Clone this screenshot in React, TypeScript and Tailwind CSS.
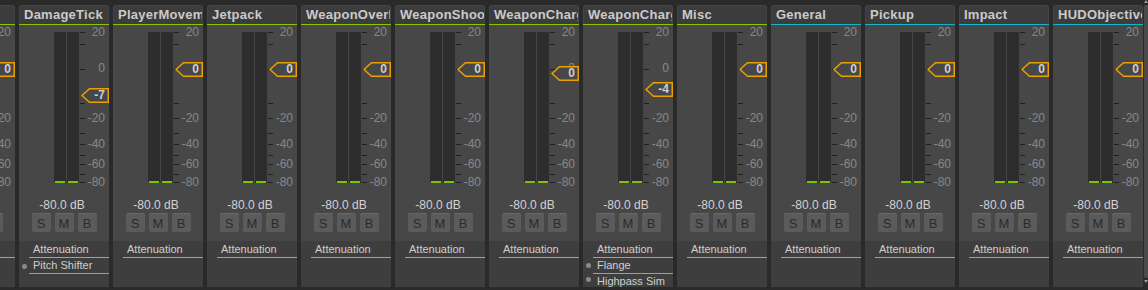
import React from "react";

type Strip = {
  name: string;
  line: "green" | "cyan";
  val: string;
  top: number;
  fx: string[];
};

const strips: Strip[] = [
  { name: "SFX", line: "green", val: "0", top: 30, fx: [] },
  { name: "DamageTick", line: "green", val: "-7", top: 56, fx: ["Pitch Shifter"] },
  { name: "PlayerMovement", line: "green", val: "0", top: 30, fx: [] },
  { name: "Jetpack", line: "green", val: "0", top: 30, fx: [] },
  { name: "WeaponOverheat", line: "green", val: "0", top: 30, fx: [] },
  { name: "WeaponShoot", line: "green", val: "0", top: 30, fx: [] },
  { name: "WeaponCharge", line: "green", val: "0", top: 34, fx: [] },
  { name: "WeaponCharged", line: "green", val: "-4", top: 50, fx: ["Flange", "Highpass Sim"] },
  { name: "Misc", line: "green", val: "0", top: 30, fx: [] },
  { name: "General", line: "cyan", val: "0", top: 30, fx: [] },
  { name: "Pickup", line: "cyan", val: "0", top: 30, fx: [] },
  { name: "Impact", line: "cyan", val: "0", top: 30, fx: [] },
  { name: "HUDObjective", line: "cyan", val: "0", top: 30, fx: [] },
];

const ticks = [0, 12, 37, 71, 86, 101, 112, 123, 132, 142, 150];
const labels: [string, number][] = [
  ["20", 0],
  ["0", 36],
  ["-20", 86],
  ["-40", 112],
  ["-60", 132],
  ["-80", 150],
];

function Handle({ val, top }: { val: string; top: number }) {
  return (
    <div className="absolute left-[62px] w-[28px] h-[15px]" style={{ top }}>
      <svg width="28" height="15" className="absolute inset-0">
        <path d="M1 7.5 L8.5 0.75 H27.25 V14.25 H8.5 Z" fill="#474747" stroke="#eaa100" strokeWidth="1.5" strokeLinejoin="miter" />
      </svg>
      <div className="absolute right-[4px] top-0 h-[15px] leading-[15px] text-[12px] font-bold text-[#cfcfcf]">{val}</div>
    </div>
  );
}

function Meter({ s }: { s: Strip }) {
  return (
    <div className="relative mt-[7px] h-[151px]">
      <div className="absolute left-[35px] top-0 w-[12px] h-[151px] bg-[#2d2d2d] flex flex-col justify-end px-[1px]">
        <div className="h-[2px] bg-[#7cc400]" />
      </div>
      <div className="absolute left-[48px] top-0 w-[12px] h-[151px] bg-[#2d2d2d] flex flex-col justify-end px-[1px]">
        <div className="h-[2px] bg-[#7cc400]" />
      </div>
      {ticks.map((t) => (
        <div key={t} className="absolute left-[61px] w-[5px] h-[1px] bg-[#1f1f1f]" style={{ top: t }} />
      ))}
      {labels.map(([l, y]) => (
        <div key={l} className="absolute right-[4px] h-[12px] leading-[12px] text-[12px] text-[#878787]" style={{ top: y - 6 }}>
          {l}
        </div>
      ))}
      <Handle val={s.val} top={s.top} />
    </div>
  );
}

function Btn({ c }: { c: string }) {
  return (
    <div className="w-[19px] h-[19px] rounded-[2px] bg-[#5b5b5b] border-t border-[#686868] flex items-center justify-center text-[13px] leading-[13px] text-[#2c2c2c]">
      {c}
    </div>
  );
}

function StripView({ s }: { s: Strip }) {
  return (
    <div className="w-[90px] shrink-0 flex flex-col">
      <div className="mt-[5px] h-[19px] rounded-t-[3px] bg-[#3c3c3c] border-t border-x border-[#444] overflow-hidden whitespace-nowrap pl-[4px] text-[13px] font-bold tracking-[0.25px] leading-[18px] text-[#cacaca]">
        {s.name}
      </div>
      <div className={`h-[1px] ${s.line === "green" ? "bg-[#8cc400]" : "bg-[#13b5c8]"}`} />
      <div className="flex-1 bg-[#474747] flex flex-col">
        <Meter s={s} />
        <div className="mt-[15px] h-[14px] leading-[14px] text-center text-[12px] text-[#d2d2d2] pr-[4px]">-80.0 dB</div>
        <div className="mt-[1px] flex justify-center gap-[4px]">
          <Btn c="S" />
          <Btn c="M" />
          <Btn c="B" />
        </div>
        <div className="mt-[9px] h-[46px] bg-[#3e3e3e] flex">
          <div className="w-[10px] flex flex-col pt-[17px]">
            {s.fx.map((f) => (
              <div key={f} className="h-[16px] flex items-center justify-center">
                <div className="w-[5px] h-[5px] rounded-full bg-[#8a8a8a]" />
              </div>
            ))}
          </div>
          <div className="flex-1 flex flex-col">
            <div className="h-[17px] border-b border-[#e0a000] pl-[4px] leading-[16px] text-[11px] text-[#cfcfcf]">Attenuation</div>
            {s.fx.map((f, i) => (
              <div
                key={f}
                className={`h-[16px] pl-[4px] leading-[15px] text-[11px] text-[#cfcfcf] ${i === 0 ? "border-b border-[#8cc400]" : ""}`}
              >
                {f}
              </div>
            ))}
          </div>
        </div>
      </div>
    </div>
  );
}

export default function App() {
  return (
    <div className="w-[1148px] h-[290px] bg-[#2a2a2a] flex overflow-hidden" style={{ fontFamily: '"Liberation Sans", Arial, sans-serif' }}>
      <div className="w-[1143px] h-[287px] overflow-hidden">
        <div className="flex gap-[4px] ml-[-75px] h-[287px]">
          {strips.map((s, i) => (
            <StripView key={i} s={s} />
          ))}
        </div>
      </div>
      <div className="w-[5px] flex flex-col items-end">
        <div className="h-[5px] w-[4px] flex items-start justify-center">
          <div className="w-0 h-0 border-l-[2px] border-r-[2px] border-b-[3px] border-l-transparent border-r-transparent border-b-[#9a9a9a]" />
        </div>
        <div className="w-[4px] h-[273px] bg-[#4a4a4a] rounded-l-[2px]" />
        <div className="h-[6px] w-[4px] flex items-center justify-center">
          <div className="w-0 h-0 border-l-[2px] border-r-[2px] border-t-[3px] border-l-transparent border-r-transparent border-t-[#9a9a9a]" />
        </div>
      </div>
    </div>
  );
}
